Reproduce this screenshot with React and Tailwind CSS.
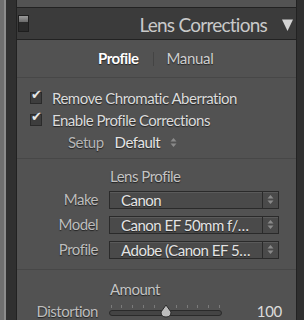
import React from 'react';

const font = { fontFamily: 'Lato, "Noto Sans", sans-serif' };

function Check({ label }) {
    return (
        <div className="flex items-center h-[22px]">
            <div className="w-[12px] h-[12px] ml-[13px] mr-[10px] bg-[#3d3d3d] border border-[#2a2a2a] relative">
                <span className="absolute left-[0px] top-[-5px] text-[13px] text-[#e6e6e6] leading-none">✔</span>
            </div>
            <span className="text-[15px] tracking-[-0.5px] text-[#dcdcdc] [text-shadow:0_1px_1px_#222]">{label}</span>
        </div>
    );
}

function Stepper() {
    return (
        <svg width="7" height="11" viewBox="0 0 7 11">
            <path d="M0.5 4.5 L3.5 1 L6.5 4.5 Z" fill="#8a8a8a" />
            <path d="M0.5 6.5 L3.5 10 L6.5 6.5 Z" fill="#8a8a8a" />
        </svg>
    );
}

function SelectRow({ label, value }) {
    return (
        <div className="flex items-center h-[25px]">
            <span className="w-[81px] text-right text-[15px] tracking-[-0.5px] text-[#bdbdbd] [text-shadow:0_1px_1px_#222]">{label}</span>
            <div className="ml-[11px] flex w-[170px] h-[18px] border border-[#2a2a2a] bg-[#4a4a4a] shadow-[inset_0_1px_0_#5a5a5a]">
                <span className="flex-1 pl-[11px] text-[15px] tracking-[-0.5px] leading-[16px] text-[#e4e4e4] whitespace-nowrap overflow-hidden [text-shadow:0_1px_1px_#222]">{value}</span>
                <div className="w-[16px] border-l border-[#2a2a2a] flex items-center justify-center">
                    <Stepper />
                </div>
            </div>
        </div>
    );
}

export default function App() {
    return (
        <div className="w-[304px] h-[320px] flex bg-[#2f2f2f] overflow-hidden" style={font}>
            <div className="w-[4px] bg-[#6f6f6f]" />
            <div className="w-[2px] bg-[#8c8c8c]" />
            <div className="w-[10px] bg-[#303030]" />
            <div className="flex flex-col w-[281px] border-x border-[#222]">
                <div className="h-[8px] bg-[#535353] border-b border-[#222] shrink-0" />
                <div className="h-[32px] bg-[#3b3b3b] flex items-center shrink-0 border-b border-[#222]">
                    <div className="ml-[1px] w-[11px] h-[17px] border border-[#1e1e1e] flex flex-col">
                        <div className="h-[6px] bg-gradient-to-b from-[#9a9a9a] to-[#6a6a6a]" />
                        <div className="flex-1 bg-[#2a2a2a]" />
                    </div>
                    <span className="ml-auto text-[19px] text-[#c9c9c9] tracking-[-0.75px] pt-[4px]">Lens Corrections</span>
                    <svg width="11" height="12" viewBox="0 0 11 12" className="ml-[15px] mr-[3px] mt-[2px]">
                        <path d="M0 0.5 L11 0.5 L5.5 12 Z" fill="#d4d4d4" />
                    </svg>
                </div>
                <div className="flex-1 bg-[#525252]">
                    <div className="h-[38px] flex items-center border-b border-[#474747]">
                        <span className="ml-[81px] text-[15px] tracking-[-0.5px] text-white font-bold [text-shadow:0_1px_1px_#222]">Profile</span>
                        <span className="ml-[15px] w-px h-[14px] bg-[#444]" />
                        <span className="ml-[12px] text-[15px] tracking-[-0.3px] text-[#cfcfcf] [text-shadow:0_1px_1px_#222]">Manual</span>
                    </div>
                    <div className="pt-[9px] pb-[5px] border-b border-[#474747]">
                        <Check label="Remove Chromatic Aberration" />
                        <Check label="Enable Profile Corrections" />
                        <div className="flex items-center h-[22px]">
                            <span className="ml-[51px] text-[15px] tracking-[-0.5px] text-[#b5b5b5] [text-shadow:0_1px_1px_#222]">Setup</span>
                            <span className="ml-[11px] text-[15px] tracking-[-0.5px] text-[#e4e4e4] [text-shadow:0_1px_1px_#222]">Default</span>
                            <span className="ml-[10px] flex"><Stepper /></span>
                        </div>
                    </div>
                    <div className="pt-[6px] pb-[7px] border-b border-[#474747]">
                        <div className="pl-[93px] text-[15px] tracking-[-0.5px] text-[#c4c4c4] h-[22px] leading-[22px] [text-shadow:0_1px_1px_#222]">Lens Profile</div>
                        <SelectRow label="Make" value="Canon" />
                        <SelectRow label="Model" value="Canon EF 50mm f/…" />
                        <SelectRow label="Profile" value="Adobe (Canon EF 5…" />
                    </div>
                    <div className="pt-[8px]">
                        <div className="pl-[93px] text-[15px] tracking-[-0.5px] text-[#c4c4c4] h-[22px] leading-[22px] [text-shadow:0_1px_1px_#222]">Amount</div>
                        <div className="flex items-center h-[22px]">
                            <span className="w-[81px] text-right text-[15px] tracking-[-0.5px] text-[#bdbdbd] [text-shadow:0_1px_1px_#222]">Distortion</span>
                            <svg width="116" height="20" viewBox="0 0 116 20" className="ml-[11px]">
                                {[2, 12, 23, 34, 45, 56, 67, 78, 88, 99, 110].map(x => (
                                    <line key={x} x1={x + 0.5} y1="4" x2={x + 0.5} y2="7" stroke="#7a7a7a" />
                                ))}
                                <rect x="0.5" y="9.5" width="112" height="5" rx="2.5" fill="#444" stroke="#2a2a2a" />
                                <path d="M57 4 L62 11 Q62 16 57 16 Q52 16 52 11 Z" fill="#bdbdbd" stroke="#2a2a2a" />
                            </svg>
                            <span className="ml-auto mr-[14px] text-[15px] tracking-[-0.3px] text-[#dcdcdc]">100</span>
                        </div>
                    </div>
                </div>
            </div>
            <div className="flex-1 bg-[#2f2f2f]" />
        </div>
    );
}
